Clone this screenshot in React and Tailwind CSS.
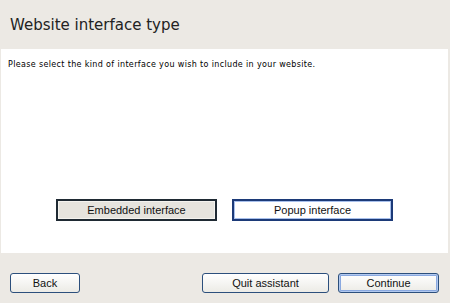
import React from "react";

export default function App() {
  const xpBtn =
    "h-[20px] rounded-[3px] border border-[#2c4f7c] bg-gradient-to-b from-[#ffffff] to-[#ecebe6] text-[11px] text-[#111] font-['Liberation_Sans',sans-serif] flex items-center justify-center";

  return (
    <div className="w-[450px] h-[303px] bg-[#ece9e4] flex flex-col font-['DejaVu_Sans',sans-serif]">
      <div className="h-[49px] flex items-center pl-[10px] pt-[2px]">
        <h1 className="text-[15px] text-[#222]">Website interface type</h1>
      </div>

      <div className="h-[204px] ml-[1px] mr-[2px] bg-white flex flex-col">
        <p className="pt-[10px] pl-[7px] text-[8px] text-black tracking-[0.35px]">
          Please select the kind of interface you wish to include in your website.
        </p>
        <div className="mt-auto mb-[32px] flex justify-center gap-[15px]">
          <button className="w-[161px] h-[22px] border-2 border-[#1f2a33] bg-[#e6e4de] text-[11px] text-[#111] font-['Liberation_Sans',sans-serif] shadow-[inset_0_0_0_1px_#f4f3ef]">
            Embedded interface
          </button>
          <button className="w-[161px] h-[22px] border-2 border-[#1c3a78] bg-white text-[11px] text-[#111] font-['Liberation_Sans',sans-serif] shadow-[inset_0_0_0_1px_#a8c0ec]">
            Popup interface
          </button>
        </div>
      </div>

      <div className="flex items-start pt-[20px] pl-[10px] pr-[11px]">
        <button className={`${xpBtn} w-[70px]`}>Back</button>
        <div className="ml-auto flex gap-[9px]">
          <button className={`${xpBtn} w-[127px]`}>Quit assistant</button>
          <button className={`${xpBtn} w-[101px] shadow-[inset_0_0_0_1px_#b2c9ef,inset_0_0_0_2px_#8aa9e0]`}>Continue</button>
        </div>
      </div>
    </div>
  );
}
